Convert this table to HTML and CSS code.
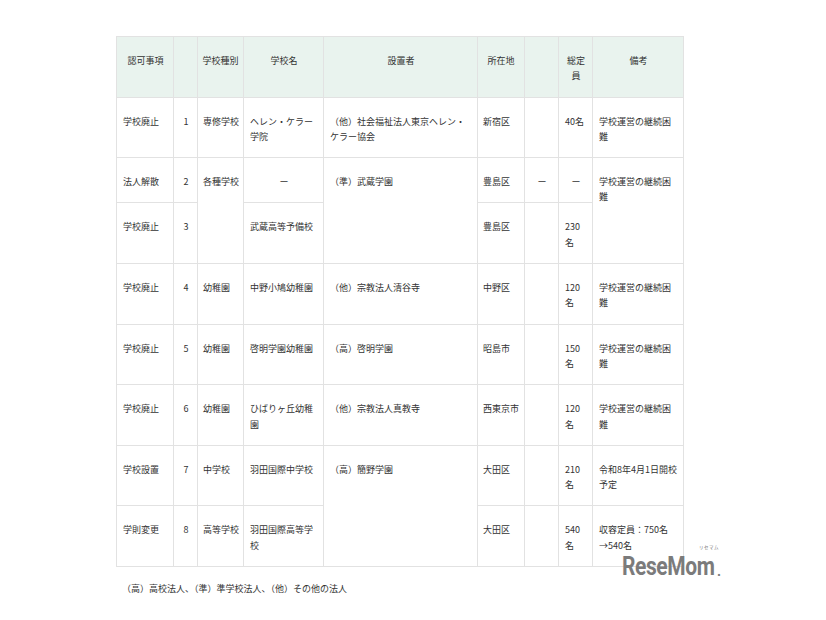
FILE: index.html
```html
<!DOCTYPE html>
<html lang="ja">
<head>
<meta charset="utf-8">
<link rel="stylesheet" href="styles.css">
</head>
<body>
<div class="page">
  <table class="grid">
    <colgroup>
      <col style="width:57px"><col style="width:24px"><col style="width:46px"><col style="width:80px"><col style="width:154px"><col style="width:47px"><col style="width:34px"><col style="width:34px"><col style="width:91px">
    </colgroup>
    <thead>
      <tr>
        <th>認可事項</th><th></th><th class="n">学校種別</th><th>学校名</th><th>設置者</th><th class="n">所在地</th><th></th><th>総定員</th><th>備考</th>
      </tr>
    </thead>
    <tbody>
      <tr>
        <td>学校廃止</td><td class="c">1</td><td class="n">専修学校</td><td>ヘレン・ケラー学院</td><td>（他）社会福祉法人東京ヘレン・ケラー協会</td><td class="n">新宿区</td><td></td><td>40名</td><td>学校運営の継続困難</td>
      </tr>
      <tr>
        <td>法人解散</td><td class="c">2</td><td class="n" rowspan="2">各種学校</td><td class="c">ー</td><td rowspan="2">（準）武蔵学園</td><td class="n">豊島区</td><td class="c">ー</td><td class="c">ー</td><td rowspan="2">学校運営の継続困難</td>
      </tr>
      <tr>
        <td>学校廃止</td><td class="c">3</td><td>武蔵高等予備校</td><td class="n">豊島区</td><td></td><td>230名</td>
      </tr>
      <tr>
        <td>学校廃止</td><td class="c">4</td><td class="n">幼稚園</td><td>中野小鳩幼稚園</td><td>（他）宗教法人清谷寺</td><td class="n">中野区</td><td></td><td>120名</td><td>学校運営の継続困難</td>
      </tr>
      <tr>
        <td>学校廃止</td><td class="c">5</td><td class="n">幼稚園</td><td>啓明学園幼稚園</td><td>（高）啓明学園</td><td class="n">昭島市</td><td></td><td>150名</td><td>学校運営の継続困難</td>
      </tr>
      <tr>
        <td>学校廃止</td><td class="c">6</td><td class="n">幼稚園</td><td>ひばりヶ丘幼稚園</td><td>（他）宗教法人真教寺</td><td class="n">西東京市</td><td></td><td>120名</td><td>学校運営の継続困難</td>
      </tr>
      <tr>
        <td>学校設置</td><td class="c">7</td><td class="n">中学校</td><td>羽田国際中学校</td><td rowspan="2">（高）簡野学園</td><td class="n">大田区</td><td></td><td>210名</td><td>令和8年4月1日開校予定</td>
      </tr>
      <tr>
        <td>学則変更</td><td class="c">8</td><td class="n">高等学校</td><td>羽田国際高等学校</td><td class="n">大田区</td><td></td><td>540名</td><td>収容定員：750名<span class="nw">→540名</span></td>
      </tr>
    </tbody>
  </table>
  <p class="note">（高）高校法人、（準）準学校法人、（他）その他の法人</p>
</div>
<div class="logo"><span class="logo-kana">リセマム</span><span class="logo-text">ReseMom</span><span class="logo-dot">.</span></div>
</body>
</html>
```

FILE: styles.css
```css
html, body {
  margin: 0;
  padding: 0;
  background: #ffffff;
}
body {
  position: relative;
  width: 826px;
  height: 620px;
  font-family: "Noto Sans CJK JP", "Noto Sans", sans-serif;
  color: #333333;
}
.page {
  padding: 36px 0 0 116px;
}
.grid {
  border-collapse: collapse;
  table-layout: fixed;
  width: 567px;
  font-size: 9px;
  line-height: 15.3px;
}
.grid th,
.grid td {
  border: 1px solid #e2e2e2;
  padding: 16px 5px 13px 6px;
  vertical-align: top;
  text-align: left;
  word-break: break-all;
}
.grid th {
  background: #e9f3ee;
  font-weight: normal;
  text-align: center;
  color: #333333;
}
.grid td.n {
  padding-right: 1px;
  padding-left: 5px;
}
.grid th.n {
  padding-left: 3px;
  padding-right: 3px;
}
.grid td.c {
  text-align: center;
}
.nw {
  white-space: nowrap;
}
.note {
  margin: 16px 0 0 6px;
  font-size: 9px;
  line-height: 12px;
  color: #333333;
}
.logo {
  position: absolute;
  left: 622px;
  top: 549px;
  height: 30px;
  width: 110px;
  color: #7b7b7b;
}
.logo-text {
  position: absolute;
  left: 0;
  top: 7px;
  font-family: Roboto, "Liberation Sans", sans-serif;
  font-weight: 700;
  font-size: 25px;
  line-height: 22px;
  letter-spacing: -0.5px;
  transform: scaleX(0.84);
  transform-origin: left top;
  white-space: nowrap;
}
.logo-dot {
  position: absolute;
  left: 95px;
  top: 16px;
  font-family: Roboto, "Liberation Sans", sans-serif;
  font-weight: 700;
  font-size: 14px;
  line-height: 12px;
}
.logo-kana {
  position: absolute;
  left: 77px;
  top: -4px;
  font-size: 4.5px;
  line-height: 5px;
  letter-spacing: 0.5px;
  white-space: nowrap;
}
```
